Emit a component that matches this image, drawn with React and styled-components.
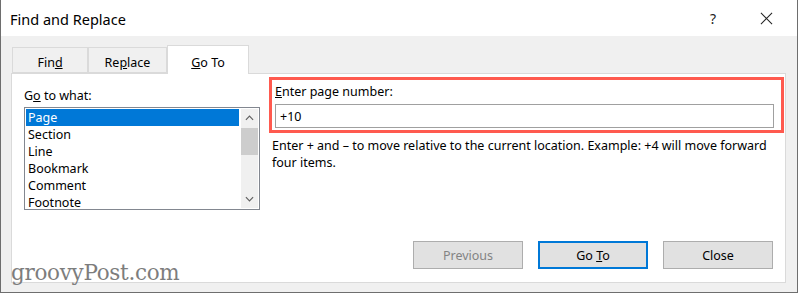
import React from 'react';
import styled, { createGlobalStyle } from 'styled-components';

const GlobalStyle = createGlobalStyle`
    html, body {
        margin: 0;
        padding: 0;
        background: #f0f0f0;
    }
    body {
        font-family: "Noto Sans", "Open Sans", sans-serif;
        color: #000;
    }
`;

const items = ['Page', 'Section', 'Line', 'Bookmark', 'Comment', 'Footnote'];

const App = () => {
    return (
        <>
            <GlobalStyle />
            <Window>
                <TitleBar>
                    <Title>Find and Replace</Title>
                    <TitleButtons>
                        <Help>?</Help>
                        <CloseGlyph viewBox="0 0 14 14">
                            <path d="M1 1 L13 13 M13 1 L1 13" stroke="#222" strokeWidth="1.1" fill="none" />
                        </CloseGlyph>
                    </TitleButtons>
                </TitleBar>
                <Body>
                    <Tabs>
                        <Tab>Fin<u>d</u></Tab>
                        <Tab>Re<u>p</u>lace</Tab>
                        <Tab $active><u>G</u>o To</Tab>
                    </Tabs>
                    <Panel>
                        <LeftCol>
                            <Label>G<u>o</u> to what:</Label>
                            <ListBox>
                                <List>
                                    {items.map((it, i) => (
                                        <Item key={it} $selected={i === 0}>{it}</Item>
                                    ))}
                                </List>
                                <ScrollBar>
                                    <Arrow viewBox="0 0 10 6">
                                        <path d="M1 5 L5 1 L9 5" stroke="#606060" strokeWidth="1.3" fill="none" />
                                    </Arrow>
                                    <Track>
                                        <Thumb />
                                    </Track>
                                    <Arrow viewBox="0 0 10 6">
                                        <path d="M1 1 L5 5 L9 1" stroke="#606060" strokeWidth="1.3" fill="none" />
                                    </Arrow>
                                </ScrollBar>
                            </ListBox>
                        </LeftCol>
                        <RightCol>
                            <Highlight>
                                <Label><u>E</u>nter page number:</Label>
                                <Input defaultValue="+10" />
                            </Highlight>
                            <Hint>
                                Enter + and – to move relative to the current location. Example: +4 will move forward four items.
                            </Hint>
                            <Buttons>
                                <Button disabled>Previous</Button>
                                <Button $default>Go <u>T</u>o</Button>
                                <Button>Close</Button>
                            </Buttons>
                        </RightCol>
                    </Panel>
                </Body>
                <Watermark>groovyPost.com</Watermark>
            </Window>
        </>
    );
};

const Window = styled.div`
    position: relative;
    width: 798px;
    height: 293px;
    box-sizing: border-box;
    border: 1px solid #6e6e6e;
    border-top: none;
    background: #f0f0f0;
    display: flex;
    flex-direction: column;
    overflow: hidden;
`;

const TitleBar = styled.div`
    height: 36px;
    background: #fff;
    display: flex;
    align-items: center;
    justify-content: space-between;
    padding: 0 0 0 9px;
`;

const Title = styled.div`
    font-size: 14.5px;
    color: #000;
    margin-top: 2px;
`;

const TitleButtons = styled.div`
    display: flex;
    align-items: center;
`;

const Help = styled.span`
    font-size: 14px;
    color: #222;
    margin-right: 44px;
`;

const CloseGlyph = styled.svg`
    width: 13px;
    height: 13px;
    margin-right: 24px;
`;

const Body = styled.div`
    flex: 1;
    padding: 9px 11px 9px 10px;
    display: flex;
    flex-direction: column;
`;

const Tabs = styled.div`
    display: flex;
    align-items: flex-end;
    padding-left: 1px;
    height: 28px;
    position: relative;
    z-index: 1;
`;

const Tab = styled.div`
    box-sizing: border-box;
    height: ${p => (p.$active ? '29px' : '26px')};
    margin-bottom: ${p => (p.$active ? '-1px' : '0')};
    padding: 4px 0 0;
    display: flex;
    align-items: center;
    justify-content: center;
    font-size: 12.5px;
    background: ${p => (p.$active ? '#fff' : '#f0f0f0')};
    border: 1px solid #dadada;
    border-bottom: ${p => (p.$active ? 'none' : '1px solid #dadada')};
    & + & {
        border-left: ${p => (p.$active ? '1px solid #dadada' : 'none')};
    }
    &:first-child {
        width: 76px;
    }
    &:nth-child(2) {
        width: 79px;
    }
    &:nth-child(3) {
        width: 82px;
    }
`;

const Panel = styled.div`
    flex: 1;
    background: #fff;
    border: 1px solid #dadada;
    display: flex;
    padding: 3px 1px 0 12px;
`;

const LeftCol = styled.div`
    width: 236px;
    display: flex;
    flex-direction: column;
    padding-top: 11px;
`;

const Label = styled.div`
    font-size: 12.5px;
    line-height: 16px;
    margin-bottom: 2px;
`;

const ListBox = styled.div`
    margin-top: 1px;
    height: 103px;
    box-sizing: border-box;
    border: 1px solid #828790;
    display: flex;
    padding: 1px;
`;

const List = styled.div`
    flex: 1;
    display: flex;
    flex-direction: column;
`;

const Item = styled.div`
    height: 17px;
    line-height: 17px;
    font-size: 12.5px;
    padding-left: 2px;
    color: ${p => (p.$selected ? '#fff' : '#000')};
    background: ${p => (p.$selected ? '#0078d7' : 'transparent')};
`;

const ScrollBar = styled.div`
    width: 17px;
    margin-left: 2px;
    display: flex;
    flex-direction: column;
    align-items: center;
    background: #f0f0f0;
`;

const Arrow = styled.svg`
    width: 9px;
    height: 6px;
    margin: 6px 0;
`;

const Track = styled.div`
    flex: 1;
    width: 100%;
`;

const Thumb = styled.div`
    height: 27px;
    margin-top: 1px;
    background: #cdcdcd;
`;

const RightCol = styled.div`
    flex: 1;
    margin-left: 9px;
    display: flex;
    flex-direction: column;
`;

const Highlight = styled.div`
    height: 56px;
    box-sizing: border-box;
    border: 3px solid #ff5a4f;
    padding: 4px 7px 0 3px;
`;

const Input = styled.input`
    display: block;
    width: 100%;
    box-sizing: border-box;
    height: 24px;
    margin-top: 4px;
    border: 1px solid #a0a0a0;
    padding: 0 4px;
    font-family: "Noto Sans", "Open Sans", sans-serif;
    font-size: 12.5px;
    outline: none;
`;

const Hint = styled.p`
    margin: 4px 0 0 3px;
    font-size: 12.5px;
    line-height: 17px;
    padding-right: 14px;
`;

const Buttons = styled.div`
    margin-top: auto;
    margin-bottom: 13px;
    display: flex;
    justify-content: flex-end;
    gap: 15px;
    padding-right: 11px;
`;

const Button = styled.button`
    width: 110px;
    height: 28px;
    box-sizing: border-box;
    font-family: "Noto Sans", "Open Sans", sans-serif;
    font-size: 12.5px;
    background: #e1e1e1;
    color: ${p => (p.disabled ? '#838383' : '#000')};
    border: ${p => (p.$default ? '2px solid #0078d7' : '1px solid #adadad')};
    padding: 0;
`;

const Watermark = styled.div`
    position: absolute;
    left: 10px;
    bottom: 9px;
    font-family: "DejaVu Serif", "Liberation Serif", serif;
    font-size: 21.5px;
    color: #7d7d7d;
    line-height: 1;
    letter-spacing: -0.3px;
`;

export default App;
